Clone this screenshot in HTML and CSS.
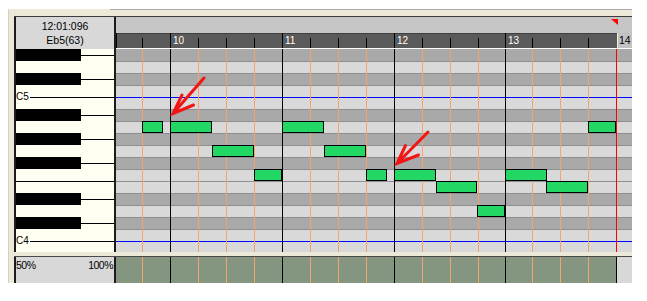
FILE: index.html
```html
<!DOCTYPE html>
<html lang="en">
<head>
  <meta charset="UTF-8">
  <title>Piano roll</title>
  <link rel="stylesheet" href="styles.css">
</head>
<body>
  <div class="window">
    <div class="splitter"></div>

    <div class="editor">
      <div class="side">
        <div class="clock">
          <div>12:01:096</div>
          <div>Eb5(63)</div>
        </div>
        <div class="piano">
          <div class="key black"></div>
          <div class="key"></div>
          <div class="key black"></div>
          <div class="key"></div>
          <div class="key c"><span class="oct">C5</span></div>
          <div class="key black"></div>
          <div class="key"></div>
          <div class="key black"></div>
          <div class="key"></div>
          <div class="key black"></div>
          <div class="key"></div>
          <div class="key ef"></div>
          <div class="key black"></div>
          <div class="key"></div>
          <div class="key black"></div>
          <div class="key"></div>
          <div class="key c"><span class="oct">C4</span></div>
        </div>
      </div>

      <div class="roll">
        <div class="head"><div class="marker"></div></div>
        <div class="ruler">
          <div class="ruler-bars">
            <div class="tick bar" style="left:0"></div>
            <div class="tick" style="left:26px"></div>
            <div class="tick bar" style="left:54px"></div><span class="num" style="left:57px">10</span>
            <div class="tick" style="left:82px"></div>
            <div class="tick" style="left:110px"></div>
            <div class="tick" style="left:138px"></div>
            <div class="tick bar" style="left:166px"></div><span class="num" style="left:169px">11</span>
            <div class="tick" style="left:194px"></div>
            <div class="tick" style="left:222px"></div>
            <div class="tick" style="left:250px"></div>
            <div class="tick bar" style="left:278px"></div><span class="num" style="left:281px">12</span>
            <div class="tick" style="left:306px"></div>
            <div class="tick" style="left:334px"></div>
            <div class="tick" style="left:362px"></div>
            <div class="tick bar" style="left:389px"></div><span class="num" style="left:392px">13</span>
            <div class="tick" style="left:416px"></div>
            <div class="tick" style="left:444px"></div>
            <div class="tick" style="left:472px"></div>
          </div>
          <div class="ruler-rest">14</div>
        </div>

        <div class="grid">
          <div class="row dark"></div>
          <div class="row"></div>
          <div class="row dark"></div>
          <div class="row"></div>
          <div class="row c"></div>
          <div class="row dark"></div>
          <div class="row"></div>
          <div class="row dark"></div>
          <div class="row"></div>
          <div class="row dark"></div>
          <div class="row"></div>
          <div class="row"></div>
          <div class="row dark"></div>
          <div class="row"></div>
          <div class="row dark"></div>
          <div class="row"></div>
          <div class="row c"></div>

          <!-- beat and bar lines -->
          <div class="vline beat" style="left:26px"></div>
          <div class="vline bar" style="left:54px"></div>
          <div class="vline beat" style="left:82px"></div>
          <div class="vline beat" style="left:110px"></div>
          <div class="vline beat" style="left:138px"></div>
          <div class="vline bar" style="left:166px"></div>
          <div class="vline beat" style="left:194px"></div>
          <div class="vline beat" style="left:222px"></div>
          <div class="vline beat" style="left:250px"></div>
          <div class="vline bar" style="left:278px"></div>
          <div class="vline beat" style="left:306px"></div>
          <div class="vline beat" style="left:334px"></div>
          <div class="vline beat" style="left:362px"></div>
          <div class="vline bar" style="left:389px"></div>
          <div class="vline beat" style="left:416px"></div>
          <div class="vline beat" style="left:444px"></div>
          <div class="vline beat" style="left:472px"></div>
          <div class="vline end" style="left:500px"></div>

          <!-- notes -->
          <div class="note" style="left:26px;top:72px;width:21px"></div>
          <div class="note" style="left:54px;top:72px;width:42px"></div>
          <div class="note" style="left:96px;top:96px;width:42px"></div>
          <div class="note" style="left:138px;top:120px;width:28px"></div>
          <div class="note" style="left:166px;top:72px;width:42px"></div>
          <div class="note" style="left:208px;top:96px;width:42px"></div>
          <div class="note" style="left:250px;top:120px;width:21px"></div>
          <div class="note" style="left:278px;top:120px;width:42px"></div>
          <div class="note" style="left:320px;top:132px;width:41px"></div>
          <div class="note" style="left:361px;top:156px;width:28px"></div>
          <div class="note" style="left:389px;top:120px;width:42px"></div>
          <div class="note" style="left:430px;top:132px;width:42px"></div>
          <div class="note" style="left:472px;top:72px;width:28px"></div>

          <svg class="arrows" width="516" height="203" viewBox="0 0 516 203">
            <g stroke="#f31414" stroke-width="3" stroke-linecap="round" fill="none">
              <path d="M88 29 L57 64.5 M66 46 L57 64.5 L77.5 56"/>
              <path d="M312 83 L281 114.5 M289.5 96.5 L281 114.5 L302.5 106"/>
            </g>
          </svg>
        </div>
      </div>
    </div>

    <div class="gap"></div>

    <div class="velocity">
      <div class="velo-side"><span>50%</span><span>100%</span></div>
      <div class="velo-lane">
        <div class="vline beat" style="left:26px"></div>
        <div class="vline bar" style="left:54px"></div>
        <div class="vline beat" style="left:82px"></div>
        <div class="vline beat" style="left:110px"></div>
        <div class="vline beat" style="left:138px"></div>
        <div class="vline bar" style="left:166px"></div>
        <div class="vline beat" style="left:194px"></div>
        <div class="vline beat" style="left:222px"></div>
        <div class="vline beat" style="left:250px"></div>
        <div class="vline bar" style="left:278px"></div>
        <div class="vline beat" style="left:306px"></div>
        <div class="vline beat" style="left:334px"></div>
        <div class="vline beat" style="left:362px"></div>
        <div class="vline bar" style="left:389px"></div>
        <div class="vline beat" style="left:416px"></div>
        <div class="vline beat" style="left:444px"></div>
        <div class="vline beat" style="left:472px"></div>
        <div class="vline bar" style="left:500px"></div>
      </div>
      <div class="velo-rest"></div>
    </div>
  </div>
</body>
</html>
```

FILE: styles.css
```css
* {
  box-sizing: border-box;
}

body {
  margin: 0;
  background: #fff;
  font-family: 'Liberation Sans', Arial, sans-serif;
  color: #000;
}

.window {
  margin: 9px 0 0 8px;
  width: 624px;
  background: #ece9d8;
  border-left: 1px solid #d4d0c4;
  padding-left: 5px;
}

.splitter {
  height: 7px;
  margin-left: 96px;
  border-top: 1px solid #a8a8a8;
}

/* editor: keyboard + roll */
.editor {
  display: flex;
  border-top: 1px solid #3c3c3c;
}

.side {
  width: 102px;
  border-left: 2px solid #1c1c1c;
  border-right: 2px solid #1c1c1c;
  display: flex;
  flex-direction: column;
}

.clock {
  height: 32px;
  background: #d8d8d8;
  padding-top: 2px;
  font-size: 10.5px;
  line-height: 14px;
  text-align: center;
}

.piano {
  background: #fffff2;
}

.key {
  position: relative;
  height: 12px;
}

.key:last-child {
  height: 11px;
}

.key.black::before {
  content: '';
  position: absolute;
  left: 0;
  top: 0;
  width: 65px;
  height: 12px;
  background: #000;
}

.key.black::after {
  content: '';
  position: absolute;
  left: 65px;
  right: 0;
  top: 6px;
  height: 1px;
  background: #000;
}

.key.c,
.key.ef {
  border-top: 1px solid #000;
}

.oct {
  position: absolute;
  left: 0;
  top: -7px;
  font-size: 10px;
  line-height: 11px;
  background: #fffff2;
  padding-right: 1px;
}

/* roll */
.roll {
  flex: 1;
  display: flex;
  flex-direction: column;
}

.head {
  position: relative;
  height: 16px;
  background: #c6c6c6;
}

.marker {
  position: absolute;
  left: 495px;
  top: 2px;
  width: 7px;
  height: 6px;
  background: #ff0000;
  clip-path: polygon(0 0, 100% 0, 100% 100%);
}

.ruler {
  display: flex;
  height: 16px;
}

.ruler-bars {
  position: relative;
  width: 501px;
  background: #5a5a5a;
  border-top: 1px solid #3e3e3e;
  border-bottom: 1px solid #fff;
}

.tick {
  position: absolute;
  top: 4px;
  bottom: 0;
  width: 1px;
  background: #000;
}

.tick.bar {
  top: -1px;
}

.num {
  position: absolute;
  top: 0;
  font-size: 10px;
  line-height: 14px;
  color: #fff;
}

.ruler-rest {
  flex: 1;
  background: #c2c2c2;
  border-left: 1px solid #ececec;
  border-bottom: 1px solid #fff;
  padding: 0 0 0 1px;
  font-size: 10.5px;
  line-height: 15px;
}

.grid {
  position: relative;
  height: 203px;
}

.row {
  height: 12px;
  background: #d9d9d9;
  border-top: 1px solid #8e8e8e;
}

.row:first-child {
  border-top: none;
}

.row:nth-child(17) {
  height: 11px;
}

.row.dark {
  background: #a9a9a9;
}

.row.c {
  border-top-color: #0000ff;
}

.vline {
  position: absolute;
  top: 0;
  bottom: 0;
  width: 1px;
}

.vline.beat {
  background: #f2a46e;
}

.vline.bar {
  background: #000;
}

.vline.end {
  background: #ff0000;
}

.note {
  position: absolute;
  height: 12px;
  background: #22d764;
  border: 1px solid #000;
}

.arrows {
  position: absolute;
  left: 0;
  top: 0;
  overflow: visible;
}

.gap {
  height: 4px;
}

/* velocity lane */
.velocity {
  display: flex;
  height: 27px;
  border-top: 1px solid #4a4a4a;
}

.velo-side {
  width: 102px;
  border-left: 2px solid #1c1c1c;
  border-right: 2px solid #1c1c1c;
  background: #d8d8d8;
  display: flex;
  justify-content: space-between;
  padding: 2px 1px 0 0;
  font-size: 10.5px;
  line-height: 13px;
  letter-spacing: -0.5px;
}

.velo-lane {
  position: relative;
  width: 501px;
  background: #849680;
}

.velo-rest {
  flex: 1;
  background: #d8d8d8;
}
```
